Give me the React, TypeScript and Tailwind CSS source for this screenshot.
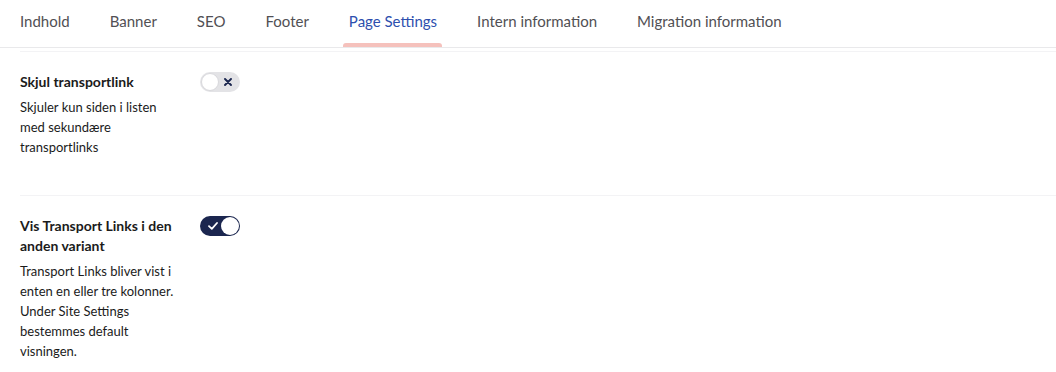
import React from "react";

const TABS = ["Indhold", "Banner", "SEO", "Footer", "Page Settings", "Intern information", "Migration information"];
const ACTIVE = "Page Settings";

function Toggle({ on }: { on: boolean }) {
  if (on) {
    return (
      <div className="relative h-5 w-10 rounded-full bg-[#1b264f]">
        <svg className="absolute left-[8px] top-[6px]" width="10" height="8" viewBox="0 0 10 8" fill="none">
          <path d="M1 4.2 L3.8 6.8 L9 1" stroke="white" strokeWidth="1.8" strokeLinecap="round" strokeLinejoin="round" />
        </svg>
        <span className="absolute right-[1px] top-[1px] h-[18px] w-[18px] rounded-full bg-white" />
      </div>
    );
  }
  return (
    <div className="relative h-5 w-10 rounded-full bg-[#e3e3e6]">
      <span className="absolute left-[1px] top-[1px] h-[18px] w-[18px] rounded-full border border-[#d8d8dc] bg-white" />
      <svg className="absolute left-[24px] top-[6px]" width="8" height="8" viewBox="0 0 8 8" fill="none">
        <path d="M1 1 L7 7 M7 1 L1 7" stroke="#1b264f" strokeWidth="1.9" strokeLinecap="round" />
      </svg>
    </div>
  );
}

function Property({ label, description, on, pb }: { label: string; description: string; on: boolean; pb: string }) {
  return (
    <div className={`flex gap-5 border-t border-[#f3f3f5] pt-5 ${pb}`}>
      <div className="w-40 shrink-0">
        <p className="text-[14px] font-bold leading-5 text-[#1b1b1b]">{label}</p>
        <p className="mt-[5px] text-[13px] leading-5 text-[#1b1b1b]">{description}</p>
      </div>
      <div>
        <Toggle on={on} />
      </div>
    </div>
  );
}

export default function App() {
  return (
    <div className="h-[372px] w-[1056px] overflow-hidden bg-white font-['Lato','Liberation_Sans',sans-serif]">
      {/* Tabs */}
      <div className="flex h-12 border-b border-[#e9e9eb] pl-5">
        {TABS.map((tab) => {
          const active = tab === ACTIVE;
          return (
            <div key={tab} className="relative mr-10 flex h-full items-start pt-[11px]">
              <span className={`text-[15px] leading-5 ${active ? "text-[#2d4fae]" : "text-[#515054]"}`}>{tab}</span>
              {active && (
                <span className="absolute bottom-0 left-[-6px] right-[-5px] h-[4px] rounded-t-[3px] bg-[#f5c1bc]" />
              )}
            </div>
          );
        })}
      </div>

      {/* Properties */}
      <div className="ml-5 pt-[3px]">
        <Property
          label="Skjul transportlink"
          description="Skjuler kun siden i listen med sekundære transportlinks"
          on={false}
          pb="pb-[38px]"
        />
        <Property
          label="Vis Transport Links i den anden variant"
          description="Transport Links bliver vist i enten en eller tre kolonner. Under Site Settings bestemmes default visningen."
          on={true}
          pb="pb-5"
        />
      </div>
    </div>
  );
}
